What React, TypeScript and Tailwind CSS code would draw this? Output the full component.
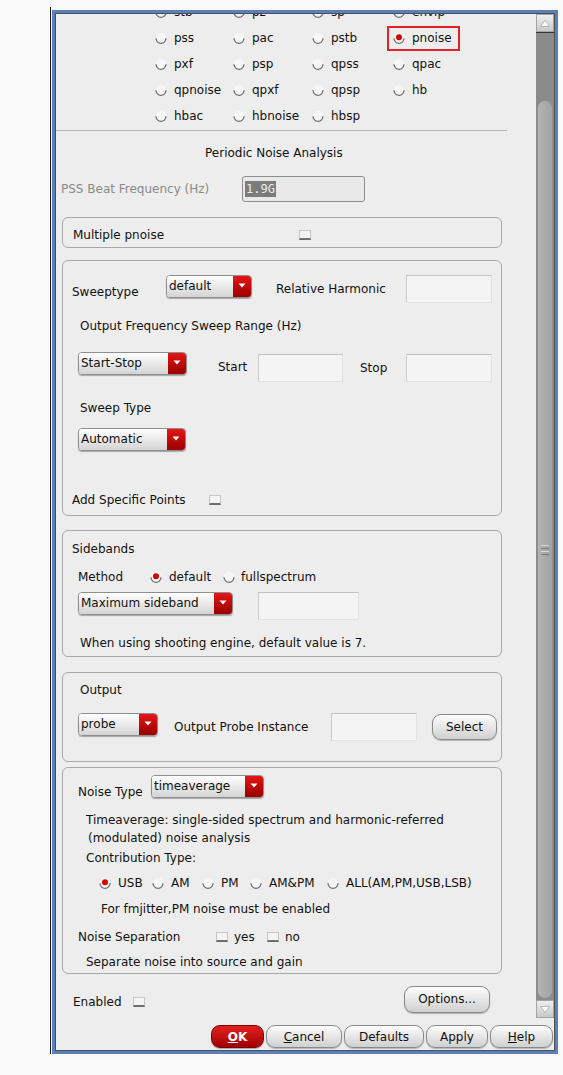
import React from "react";

function Radio({ on = false }: { on?: boolean }) {
  return (
    <svg width="12" height="12" viewBox="0 0 12 12" className="shrink-0">
      <circle cx="6" cy="6" r="5.3" fill="#f6f6f6" />
      <path d="M1 6.3 A5 5 0 0 0 11 6.3" fill="none" stroke="#6f6f6f" strokeWidth="1.3" />
      {on && <circle cx="6" cy="5.2" r="3" fill="#d40000" />}
    </svg>
  );
}

function Check() {
  return (
    <span className="inline-block shrink-0 w-[12px] h-[10px] bg-[#f4f4f4] border border-[#c6c6c6] border-b-2 border-b-[#6e6e6e]" />
  );
}

function Drop({ text, w }: { text: string; w: string }) {
  return (
    <div className={`flex shrink-0 h-[23px] ${w} rounded-[4px] border border-[#8e8e8e] overflow-hidden shadow-[0_1px_1px_rgba(0,0,0,0.3)]`}>
      <div className="flex-1 bg-linear-to-b from-[#ffffff] to-[#d4d4d4] pl-[2px] leading-[20px] whitespace-nowrap overflow-hidden">
        {text}
      </div>
      <div className="w-[18px] bg-linear-to-b from-[#e51616] to-[#9a0000] flex items-center justify-center pb-[3px]">
        <svg width="8" height="5" viewBox="0 0 8 5">
          <path d="M0.5 0.5 H7.5 L4 4.5Z" fill="#ffffff" />
        </svg>
      </div>
    </div>
  );
}

function Field({ w, extra = "" }: { w: string; extra?: string }) {
  return (
    <div className={`shrink-0 ${w} h-[28px] bg-[#f4f4f4] border border-[#e2e2e2] border-t-[#c2c2c2] border-l-[#cbcbcb] ${extra}`} />
  );
}

function Btn({ children, cls }: { children: React.ReactNode; cls: string }) {
  return (
    <div className={`shrink-0 ${cls} rounded-[9px] border border-[#898989] bg-linear-to-b from-[#fdfdfd] to-[#d0d0d0] shadow-[0_1px_1px_rgba(0,0,0,0.25)] flex items-center justify-center whitespace-nowrap`}>
      {children}
    </div>
  );
}

function RadioItem({ label, on = false }: { label: string; on?: boolean }) {
  return (
    <div className="flex items-center gap-[7px] whitespace-nowrap">
      <Radio on={on} />
      <span>{label}</span>
    </div>
  );
}

const rows: string[][] = [
  ["stb", "pz", "sp", "envlp"],
  ["pss", "pac", "pstb", "pnoise"],
  ["pxf", "psp", "qpss", "qpac"],
  ["qpnoise", "qpxf", "qpsp", "hb"],
  ["hbac", "hbnoise", "hbsp", ""],
];

function Scrollbar() {
  return (
    <div className="w-[18px] flex flex-col shrink-0">
      <div className="h-[18px] bg-linear-to-b from-[#f0f0f0] to-[#c8c8c8] border border-[#a3a3a3] flex items-center justify-center">
        <svg width="10" height="7" viewBox="0 0 10 7">
          <path d="M5 0.5 L9.5 6.5 H0.5Z" fill="#ffffff" stroke="#a8a8a8" strokeWidth="0.8" />
        </svg>
      </div>
      <div className="h-px bg-[#333333]" />
      <div className="flex-1 bg-[#8b8b8b] pt-[67px] pb-[1px] px-[1px] flex flex-col">
        <div className="flex-1 rounded-[8px] bg-linear-to-r from-[#b3b3b3] to-[#a2a2a2] border border-[#8f8f8f] flex flex-col items-center justify-center gap-[2px]">
          <div className="w-[8px] h-px bg-[#d6d6d6]" />
          <div className="w-[8px] h-px bg-[#7a7a7a]" />
          <div className="w-[8px] h-px bg-[#d6d6d6]" />
          <div className="w-[8px] h-px bg-[#7a7a7a]" />
        </div>
      </div>
      <div className="h-[18px] bg-linear-to-b from-[#f0f0f0] to-[#c8c8c8] border border-[#a3a3a3] flex items-center justify-center">
        <svg width="10" height="7" viewBox="0 0 10 7">
          <path d="M5 6.5 L9.5 0.5 H0.5Z" fill="#ffffff" stroke="#a8a8a8" strokeWidth="0.8" />
        </svg>
      </div>
    </div>
  );
}

export default function App() {
  return (
    <div className="font-['DejaVu_Sans',sans-serif] text-[12px] leading-[14px] text-[#111111] bg-[#f9f9f9] w-[563px] h-[1075px] overflow-hidden">
      <div className="pl-[50px] pt-[7px]">
        <div className="border-l border-[#1a1a1a] pt-[3px] w-[508px]">
          <div className="ml-[1px] w-[506px] h-[1044px] border-[3px] border-[#5b7fb9]">
            <div className="h-full border border-[#505050] bg-[#ededed] flex flex-col">
              <div className="flex h-[1004px]">
                <div className="flex-1 overflow-hidden">
                  {/* analysis radio grid */}
                  <div className="-mt-[15px] pl-[99px] grid grid-cols-[78px_79px_81px_80px]">
                    {rows.map((r, i) =>
                      r.map((n, j) => (
                        <div key={`${i}-${j}`} className="relative h-[26px] flex items-center">
                          {n && <RadioItem label={n} on={n === "pnoise"} />}
                          {n === "pnoise" && (
                            <div className="absolute left-[-6px] top-[1px] w-[73px] h-[25px] border-2 border-[#e3212a]" />
                          )}
                        </div>
                      ))
                    )}
                  </div>
                  <div className="mt-[1px] w-[451px] h-px bg-[#b4b4b4]" />

                  <div className="mt-[15px] pl-[149px]">Periodic Noise Analysis</div>

                  <div className="mt-[16px] pl-[5px] h-[26px] flex items-center">
                    <div className="w-[181px] text-[#8a8a8a]">PSS Beat Frequency (Hz)</div>
                    <div className="w-[123px] h-[26px] rounded-[3px] border border-[#8d8d8d] bg-[#e9e9e9] flex items-center pl-[2px]">
                      <span className="font-['DejaVu_Sans_Mono',monospace] bg-[#7b7b7b] text-[#ececec] leading-[16px] px-[1px]">1.9G</span>
                    </div>
                  </div>

                  {/* Multiple pnoise */}
                  <div className="mt-[15px] ml-[6px] w-[440px] h-[31px] rounded-[6px] border border-[#a9a9a9] pl-[10px] pt-[5px] flex items-center">
                    <div className="w-[226px]">Multiple pnoise</div>
                    <Check />
                  </div>

                  {/* Sweep */}
                  <div className="mt-[12px] ml-[6px] w-[440px] h-[256px] rounded-[6px] border border-[#a9a9a9]">
                    <div className="mt-[14px] pl-[9px] flex items-start">
                      <div className="w-[94px] mt-[10px]">Sweeptype</div>
                      <Drop text="default" w="w-[86px]" />
                      <div className="ml-[24px] w-[130px] mt-[7px]">Relative Harmonic</div>
                      <Field w="w-[86px]" />
                    </div>
                    <div className="mt-[16px] pl-[17px]">Output Frequency Sweep Range (Hz)</div>
                    <div className="mt-[19px] pl-[15px] flex items-start">
                      <Drop text="Start-Stop" w="w-[109px]" />
                      <div className="ml-[31px] w-[40px] mt-[8px]">Start</div>
                      <Field w="w-[85px]" extra="mt-[2px]" />
                      <div className="ml-[17px] w-[46px] mt-[9px]">Stop</div>
                      <Field w="w-[86px]" extra="mt-[2px]" />
                    </div>
                    <div className="mt-[19px] pl-[17px]">Sweep Type</div>
                    <div className="mt-[13px] pl-[15px] flex">
                      <Drop text="Automatic" w="w-[108px]" />
                    </div>
                    <div className="mt-[42px] pl-[9px] h-[14px] flex items-center">
                      <div className="w-[137px]">Add Specific Points</div>
                      <Check />
                    </div>
                  </div>

                  {/* Sidebands */}
                  <div className="mt-[14px] ml-[6px] w-[440px] h-[127px] rounded-[6px] border border-[#a9a9a9]">
                    <div className="mt-[11px] pl-[9px]">Sidebands</div>
                    <div className="mt-[14px] pl-[15px] h-[14px] flex items-center">
                      <div className="w-[72px]">Method</div>
                      <Radio on />
                      <div className="ml-[7px] w-[54px]">default</div>
                      <Radio />
                      <div className="ml-[6px]">fullspectrum</div>
                    </div>
                    <div className="mt-[8px] pl-[15px] flex items-start">
                      <Drop text="Maximum sideband" w="w-[155px]" />
                      <Field w="w-[101px]" extra="ml-[25px]" />
                    </div>
                    <div className="mt-[16px] pl-[17px]">When using shooting engine, default value is 7.</div>
                  </div>

                  {/* Output */}
                  <div className="mt-[15px] ml-[6px] w-[440px] h-[90px] rounded-[6px] border border-[#a9a9a9]">
                    <div className="mt-[10px] pl-[17px]">Output</div>
                    <div className="mt-[16px] pl-[15px] flex items-start">
                      <Drop text="probe" w="w-[80px]" />
                      <div className="ml-[16px] w-[157px] mt-[7px]">Output Probe Instance</div>
                      <Field w="w-[86px]" />
                      <Btn cls="ml-[15px] w-[65px] h-[26px] mt-[1px]">Select</Btn>
                    </div>
                  </div>

                  {/* Noise */}
                  <div className="mt-[5px] ml-[6px] w-[440px] h-[207px] rounded-[6px] border border-[#a9a9a9]">
                    <div className="mt-[7px] pl-[15px] flex items-start">
                      <div className="w-[73px] mt-[10px]">Noise Type</div>
                      <Drop text="timeaverage" w="w-[113px]" />
                    </div>
                    <div className="mt-[12px] pl-[23px] leading-[18px]">
                      <div>Timeaverage: single-sided spectrum and harmonic-referred</div>
                      <div className="pl-[2px]">(modulated) noise analysis</div>
                    </div>
                    <div className="mt-[4px] pl-[23px]">Contribution Type:</div>
                    <div className="mt-[11px] pl-[36px] h-[14px] flex items-center">
                      <div className="w-[53px]"><RadioItem label="USB" on /></div>
                      <div className="w-[50px]"><RadioItem label="AM" /></div>
                      <div className="w-[48px]"><RadioItem label="PM" /></div>
                      <div className="w-[77px]"><RadioItem label="AM&PM" /></div>
                      <RadioItem label="ALL(AM,PM,USB,LSB)" />
                    </div>
                    <div className="mt-[12px] pl-[38px]">For fmjitter,PM noise must be enabled</div>
                    <div className="mt-[14px] pl-[15px] h-[14px] flex items-center">
                      <div className="w-[138px]">Noise Separation</div>
                      <Check />
                      <div className="ml-[6px] w-[33px]">yes</div>
                      <Check />
                      <div className="ml-[6px]">no</div>
                    </div>
                    <div className="mt-[11px] pl-[23px]">Separate noise into source and gain</div>
                  </div>

                  {/* Enabled row */}
                  <div className="mt-[11px] pl-[17px] h-[28px] flex items-center">
                    <div className="flex items-center mt-[5px]">
                      <div className="w-[60px]">Enabled</div>
                      <Check />
                    </div>
                    <Btn cls="ml-[259px] w-[86px] h-[27px]">Options...</Btn>
                  </div>
                </div>
                <Scrollbar />
              </div>

              {/* bottom buttons */}
              <div className="flex justify-end gap-[2px] pr-[1px] pt-[7px]">
                <div className="w-[53px] h-[23px] rounded-[9px] border border-[#7a0000] bg-linear-to-b from-[#e32020] to-[#a10000] shadow-[0_1px_1px_rgba(0,0,0,0.3)] flex items-center justify-center text-white font-bold">
                  <span><span className="underline">O</span>K</span>
                </div>
                <Btn cls="w-[76px] h-[23px]"><span><span className="underline">C</span>ancel</span></Btn>
                <Btn cls="w-[80px] h-[23px]">Defaults</Btn>
                <Btn cls="w-[62px] h-[23px]">Apply</Btn>
                <Btn cls="w-[63px] h-[23px]"><span><span className="underline">H</span>elp</span></Btn>
              </div>
            </div>
          </div>
        </div>
      </div>
    </div>
  );
}
